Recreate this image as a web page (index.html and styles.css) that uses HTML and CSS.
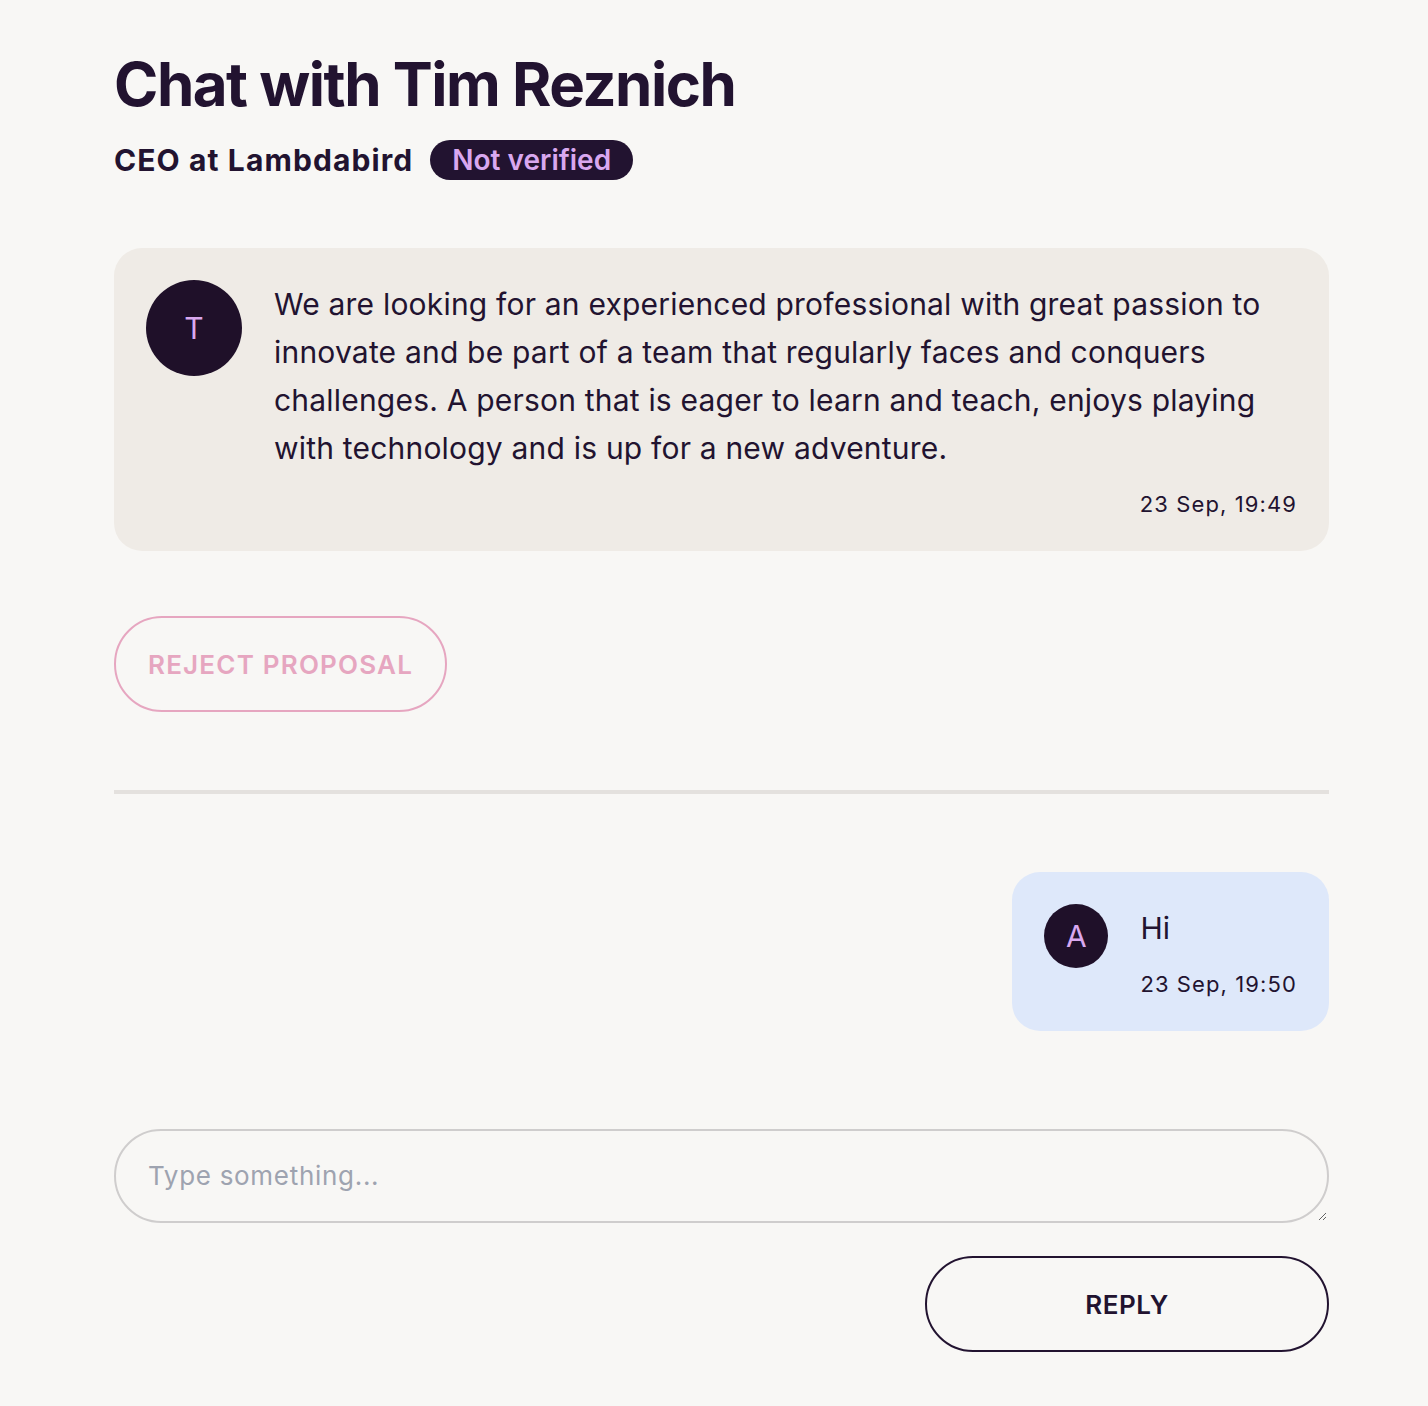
FILE: index.html
```html
<!DOCTYPE html>
<html lang="en">
<head>
<meta charset="utf-8">
<title>Chat with Tim Reznich</title>
<link rel="stylesheet" href="styles.css">
</head>
<body>
<main class="page">
  <header class="header">
    <h1 class="title">Chat with Tim Reznich</h1>
    <div class="subtitle">
      <span class="role">CEO at Lambdabird</span>
      <span class="badge">Not verified</span>
    </div>
  </header>

  <section class="message message-in">
    <div class="avatar avatar-lg">T</div>
    <div class="message-body">
      <p class="message-text">We are looking for an experienced professional with great passion to innovate and be part of a team that regularly faces and conquers challenges. A person that is eager to learn and teach, enjoys playing with technology and is up for a new adventure.</p>
      <div class="message-time">23 Sep, 19:49</div>
    </div>
  </section>

  <div class="actions">
    <button class="btn btn-reject" type="button">Reject proposal</button>
  </div>

  <hr class="divider">

  <div class="thread">
    <section class="message message-out">
      <div class="avatar avatar-sm">A</div>
      <div class="message-body">
        <p class="message-text">Hi</p>
        <div class="message-time">23 Sep, 19:50</div>
      </div>
    </section>
  </div>

  <form class="composer">
    <textarea class="input" rows="1" placeholder="Type something..."></textarea>
    <div class="composer-actions">
      <button class="btn btn-reply" type="button">Reply</button>
    </div>
  </form>
</main>
</body>
</html>
```
FILE: styles.css
```css
* { box-sizing: border-box; }

html, body {
  margin: 0;
  padding: 0;
  background: #f8f7f5;
}

body {
  font-family: Inter, "Noto Sans", "Liberation Sans", sans-serif;
  color: #221330;
}

.page {
  padding: 48px 99px 54px 114px;
  display: flex;
  flex-direction: column;
}

.header {
  display: flex;
  flex-direction: column;
}

.title {
  margin: 0;
  font-size: 60px;
  line-height: 72px;
  font-weight: 700;
  letter-spacing: -1.5px;
}

.subtitle {
  margin-top: 20px;
  display: flex;
  align-items: center;
  gap: 17px;
}

.role {
  font-size: 30px;
  line-height: 40px;
  font-weight: 700;
  letter-spacing: 1.1px;
}

.badge {
  background: #221330;
  color: #d9a8ef;
  font-size: 28px;
  line-height: 40px;
  font-weight: 600;
  padding: 0 22px;
  border-radius: 999px;
}

.message {
  display: flex;
  align-items: flex-start;
  gap: 32px;
  padding: 32px;
  border-radius: 28px;
}

.message-in {
  margin-top: 68px;
  background: #efebe6;
}

.message-out {
  background: #dee8fa;
}

.avatar {
  flex: none;
  border-radius: 50%;
  background: #1f1029;
  color: #d9a8ef;
  display: flex;
  align-items: center;
  justify-content: center;
}

.avatar-lg {
  width: 96px;
  height: 96px;
  font-size: 30px;
}

.avatar-sm {
  width: 64px;
  height: 64px;
  font-size: 30px;
}

.message-body {
  flex: 1;
  display: flex;
  flex-direction: column;
}

.message-text {
  margin: 0;
  font-size: 30px;
  line-height: 48px;
  letter-spacing: 0.2px;
}

.message-time {
  margin-top: 17px;
  font-size: 22px;
  line-height: 30px;
  text-align: right;
  letter-spacing: 1.1px;
}

.actions {
  margin-top: 65px;
  display: flex;
}

.btn {
  font-family: inherit;
  background: transparent;
  height: 96px;
  border-radius: 999px;
  border: 2px solid;
  text-transform: uppercase;
  font-size: 26px;
  font-weight: 600;
  letter-spacing: 0.5px;
  cursor: pointer;
}

.btn-reject {
  padding: 0 32px;
  border-color: #e6a6c0;
  color: #e6a6c0;
  letter-spacing: 1.2px;
}

.divider {
  margin: 78px 0 0;
  border: 0;
  height: 4px;
  background: #e4e1de;
}

.thread {
  margin-top: 78px;
  display: flex;
  justify-content: flex-end;
}

.composer {
  margin-top: 98px;
  display: flex;
  flex-direction: column;
  gap: 33px;
}

.input {
  display: block;
  width: 100%;
  height: 94px;
  padding: 24px 32px;
  font-family: inherit;
  font-size: 26px;
  line-height: 42px;
  letter-spacing: 0.7px;
  color: #221330;
  background: transparent;
  border: 2px solid #cfcdcd;
  border-radius: 999px;
  outline: none;
}

.input::placeholder {
  color: #9ea3b0;
}

.composer-actions {
  display: flex;
  justify-content: flex-end;
}

.btn-reply {
  width: 404px;
  border-color: #221330;
  color: #221330;
  font-weight: 600;
}
```
